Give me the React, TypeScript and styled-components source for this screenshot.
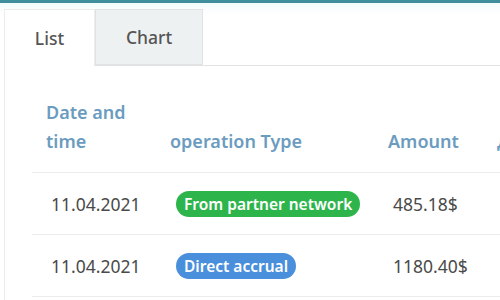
import styled, { createGlobalStyle } from "styled-components";

const GlobalStyle = createGlobalStyle`
  html, body {
    margin: 0;
    padding: 0;
    background: #fff;
    font-family: "Noto Sans", "Open Sans", sans-serif;
    overflow: hidden;
  }
`;

const Page = styled.div`
  width: 500px;
  height: 300px;
  overflow: hidden;
  border-top: 3px solid #3e8e9c;
  box-sizing: border-box;
  background: linear-gradient(#f3fbfc 0, #fff 12px);
`;

const Wrapper = styled.div`
  padding: 6px 0 0 4px;
`;

const Tabs = styled.div`
  display: flex;
  border-bottom: 1px solid #e2e2e2;
  height: 56px;
`;

const Tab = styled.div<{ $active?: boolean }>`
  box-sizing: border-box;
  width: ${(p) => (p.$active ? "91px" : "108px")};
  height: ${(p) => (p.$active ? "57px" : "56px")};
  display: flex;
  align-items: center;
  justify-content: center;
  font-size: 17.5px;
  font-weight: 500;
  color: #555;
  background: ${(p) => (p.$active ? "#fff" : "#eef1f2")};
  border: 1px solid ${(p) => (p.$active ? "#ececec" : "#e0e3e5")};
  border-bottom: ${(p) => (p.$active ? "none" : "1px solid #e0e3e5")};
  position: relative;
  z-index: 1;
`;

const Panel = styled.div`
  border-left: 1px solid #ececec;
  padding-left: 27px;
  height: 240px;
  overflow: hidden;
`;

const Table = styled.table`
  border-collapse: collapse;
  width: 560px;
  table-layout: fixed;
`;

const Col = styled.col<{ $w: number }>`
  width: ${(p) => p.$w}px;
`;

const HeadCell = styled.th`
  text-align: left;
  vertical-align: bottom;
  padding: 32px 14px 16px;
  font-size: 18px;
  font-weight: 600;
  line-height: 29px;
  color: #6b9cc0;
  border-bottom: 1px solid #ececec;
  white-space: normal;
`;

const Cell = styled.td`
  height: 61px;
  padding: 0 19px;
  font-size: 17.5px;
  color: #4a4a4a;
  border-bottom: 1px solid #ececec;
  white-space: nowrap;
`;

const BadgeCell = styled(Cell)`
  padding: 0 14px 0 20px;
`;

const Badge = styled.span<{ $color: string }>`
  display: inline-block;
  background: ${(p) => p.$color};
  color: #fff;
  font-size: 15.5px;
  font-weight: 600;
  line-height: 26px;
  padding: 0 8px;
  border-radius: 13px;
`;

const rows = [
  { date: "11.04.2021", type: "From partner network", color: "#2db54c", amount: "485.18$" },
  { date: "11.04.2021", type: "Direct accrual", color: "#4a8fdb", amount: "1180.40$" },
];

export default function App() {
  return (
    <>
      <GlobalStyle />
      <Page>
        <Wrapper>
          <Tabs>
            <Tab $active>List</Tab>
            <Tab>Chart</Tab>
          </Tabs>
          <Panel>
            <Table>
              <colgroup>
                <Col $w={124} />
                <Col $w={218} />
                <Col $w={109} />
                <Col $w={109} />
              </colgroup>
              <thead>
                <tr>
                  <HeadCell>Date and time</HeadCell>
                  <HeadCell>operation Type</HeadCell>
                  <HeadCell>Amount</HeadCell>
                  <HeadCell>Дата</HeadCell>
                </tr>
              </thead>
              <tbody>
                {rows.map((r, i) => (
                  <tr key={i}>
                    <Cell>{r.date}</Cell>
                    <BadgeCell>
                      <Badge $color={r.color}>{r.type}</Badge>
                    </BadgeCell>
                    <Cell>{r.amount}</Cell>
                    <Cell></Cell>
                  </tr>
                ))}
              </tbody>
            </Table>
          </Panel>
        </Wrapper>
      </Page>
    </>
  );
}
